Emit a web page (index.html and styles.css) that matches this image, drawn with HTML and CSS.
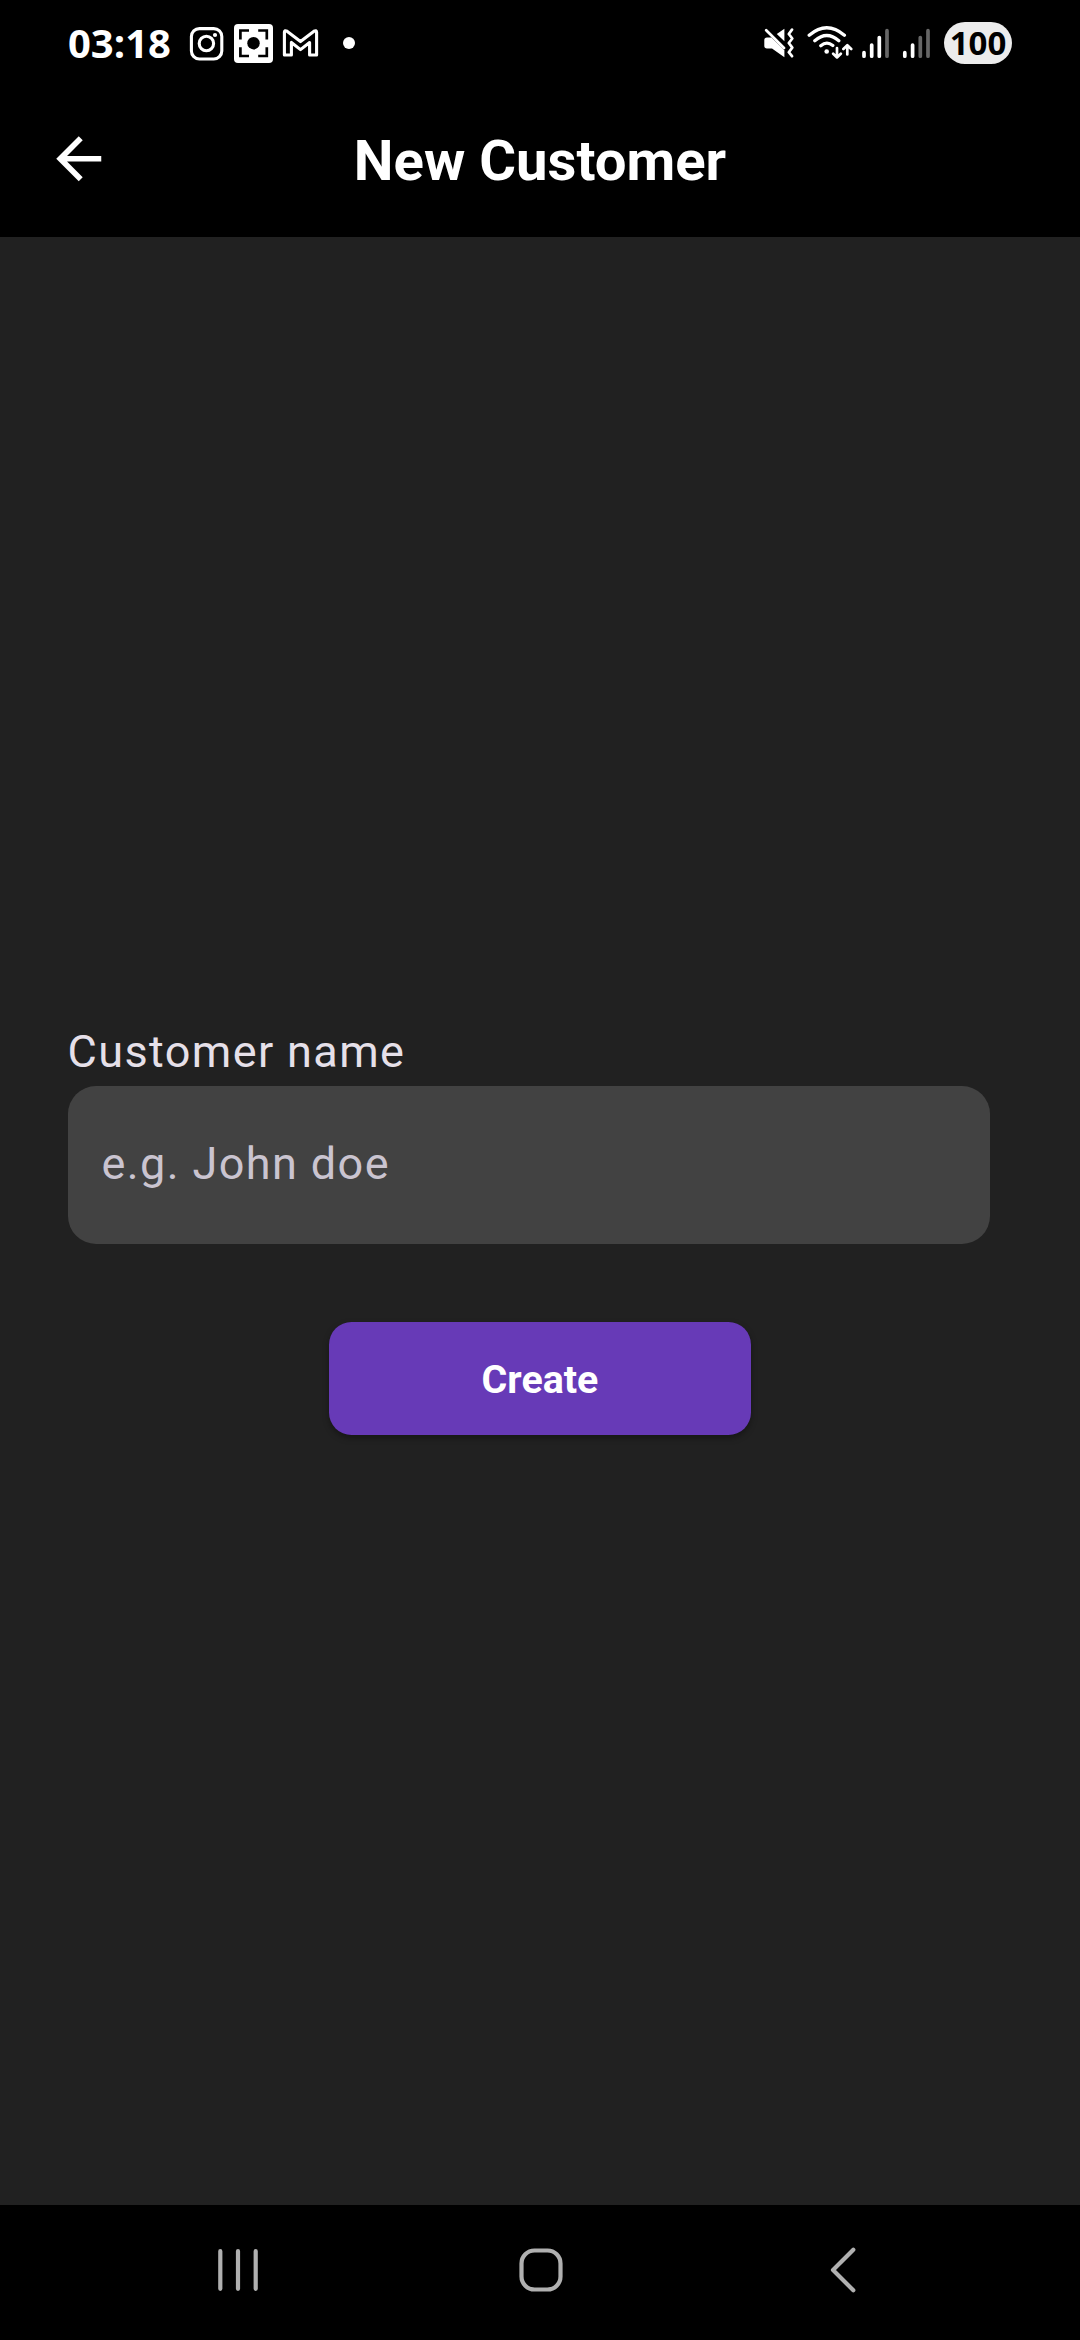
FILE: index.html
```html
<!DOCTYPE html>
<html lang="en">
<head>
<meta charset="utf-8">
<title>New Customer</title>
<link rel="stylesheet" href="styles.css">
</head>
<body>
<div class="screen">
  <div class="status">
    <div class="status-left">
      <span class="clock">03:18</span>
      <svg class="notif" width="132" height="42" viewBox="188 22 132 42" fill="none" stroke="#fff" stroke-width="3.1">
        <rect x="191.4" y="28.6" width="30.4" height="30.4" rx="8"/>
        <circle cx="206.4" cy="43.5" r="7.2"/>
        <circle cx="215" cy="35" r="2.1" fill="#fff" stroke="none"/>
        <rect x="234" y="24" width="39" height="39" rx="4" fill="#fff" stroke="none"/>
        <path d="M240.4 39.5V30.5H249M258.2 30.5H266.8V39.5M266.8 47.3V56H258.2M249 56H240.4V47.3" stroke="#000" stroke-width="2.7"/>
        <circle cx="253.5" cy="43.2" r="6.2" fill="#000" stroke="none"/>
        <path d="M284.4 55V32.2Q284.6 29.8 287 31.2L300.5 41.6 314 31.2Q316.4 29.8 316.6 32.2V55H309.6V42.5L300.5 49.6 291.4 42.5V55Z" stroke-width="3.1" stroke-linejoin="round"/>
      </svg>
      <span class="more-dot"></span>
    </div>
    <div class="status-right">
      <svg width="30" height="32" viewBox="764 27 30 32" fill="#fff">
        <path d="M784.4 28.8V41.2L776.8 34ZM764.3 40Q764.3 37.4 767 37.4H771.4L784.4 50.2V57.2L772 48.4H767Q764.3 48.4 764.3 46Z"/>
        <path d="M766.2 30.2 784 48M792 29.6 788.8 34 792.3 38.5 788.8 43 792.3 47.6 788.8 52.2 792 56.2" fill="none" stroke="#fff" stroke-width="2.7" stroke-linecap="round" stroke-linejoin="round"/>
      </svg>
      <svg width="46" height="34" viewBox="807 25 46 34" fill="none" stroke="#fff" stroke-width="3.3" stroke-linecap="round" stroke-linejoin="round">
        <path d="M809.2 35.2Q826.8 20.2 844.4 35.2M814.8 40.7Q826.8 30.4 838.8 40.7M820.8 45.7Q826.8 40.6 832.8 45.5"/>
        <circle cx="826.7" cy="51.5" r="2.3" fill="#fff" stroke="none"/>
        <path d="M837 48V57.2M833.2 53.8 837 57.4 840.8 53.8M847.3 54.4V45.6M843.4 49 847.3 45.2 851.2 49" stroke-width="2.7"/>
      </svg>
      <svg width="68" height="31" viewBox="862 27 68 31" fill="none" stroke="#fff" stroke-width="3.7" stroke-linecap="round">
        <path d="M864 51.7V55.2M871.7 44V55.2M879.3 36.5V55.2M904.8 51.7V55.2M912.6 44V55.2"/>
        <path d="M887 29.7V55.2M920.3 36.5V55.2M928 29.7V55.2" stroke="#666"/>
      </svg>
      <span class="battery">100</span>
    </div>
  </div>
  <header class="toolbar">
    <svg class="back" viewBox="0 0 24 24" fill="#fff"><path d="M20 11H7.83l5.59-5.59L12 4l-8 8 8 8 1.41-1.41L7.83 13H20v-2z"/></svg>
    <h1 class="title">New Customer</h1>
  </header>
  <main class="content">
    <label class="label" for="name">Customer name</label>
    <input class="field" id="name" type="text" placeholder="e.g. John doe">
    <button class="create" type="button">Create</button>
  </main>
  <nav class="navbar">
    <svg viewBox="0 0 48 48"><path d="M6.3 5.2V42.8M24 5.2V42.8M41.7 5.2V42.8"/></svg>
    <svg viewBox="0 0 48 48"><rect x="4.5" y="4.5" width="39" height="39" rx="13"/></svg>
    <svg viewBox="0 0 48 48"><path d="M34.3 3.7 14 24 34.3 44.3"/></svg>
  </nav>
</div>
</body>
</html>
```
FILE: styles.css
```css
* {
  box-sizing: border-box;
}

body {
  margin: 0;
  background: #000;
  font-family: Roboto, sans-serif;
}

svg {
  display: block;
  flex: none;
}

.screen {
  display: flex;
  flex-direction: column;
  width: 1080px;
  height: 2340px;
  color: #fff;
}

.status {
  display: flex;
  justify-content: space-between;
  align-items: flex-start;
  height: 79.5px;
  padding: 22px 68px 0;
  font-family: "Open Sans", sans-serif;
}

.status-left,
.status-right {
  display: flex;
  align-items: center;
  height: 42px;
}

.clock {
  width: 120px;
  font-size: 40px;
  font-weight: 700;
  line-height: 42px;
}

.more-dot {
  width: 12px;
  height: 12px;
  margin-left: 23px;
  border-radius: 50%;
  background: #fff;
}

.status-right svg:nth-child(1) {
  margin-right: 13px;
}

.status-right svg:nth-child(2) {
  margin: -2px 9px 0 0;
}

.battery {
  width: 68px;
  height: 42px;
  margin-left: 14px;
  border-radius: 21px;
  background: #ececec;
  color: #000;
  font-size: 33px;
  font-weight: 700;
  line-height: 42px;
  text-align: center;
}

.toolbar {
  display: grid;
  grid-template-columns: 68px 1fr 68px;
  align-items: center;
  height: 157.5px;
  padding: 0 45px;
}

.back {
  width: 67.5px;
  height: 67.5px;
}

.title {
  margin: 5px 0 0;
  font-size: 56.25px;
  font-weight: 700;
  line-height: 66px;
  text-align: center;
}

.content {
  display: flex;
  flex: 1;
  flex-direction: column;
  padding: 788px 90px 0 67.5px;
  background: #212121;
}

.label {
  height: 61px;
  color: #e6e0e9;
  font-size: 45px;
  letter-spacing: 1.4px;
  line-height: 54px;
}

.field {
  height: 158px;
  padding: 0 34px 3px;
  border: 0;
  border-radius: 28px;
  background: #424242;
  color: #e6e0e9;
  font-family: inherit;
  font-size: 45px;
  letter-spacing: 1.4px;
}

.field::placeholder {
  color: #cac4d0;
  opacity: 1;
}

.create {
  align-self: center;
  width: 422px;
  height: 113px;
  margin: 78px 0 0 22.5px;
  padding: 1px 0 0;
  border: 0;
  border-radius: 22.5px;
  background: #673ab7;
  box-shadow: 0 3px 6px rgba(0, 0, 0, 0.35);
  color: #fff;
  font-family: inherit;
  font-size: 39.4px;
  font-weight: 700;
}

.navbar {
  display: flex;
  justify-content: space-between;
  align-items: center;
  height: 135px;
  padding: 0 213px 5px 214px;
}

.navbar svg {
  width: 48px;
  height: 48px;
  fill: none;
  stroke: #b0b0b0;
  stroke-width: 4.2;
  stroke-linecap: round;
  stroke-linejoin: round;
}
```
